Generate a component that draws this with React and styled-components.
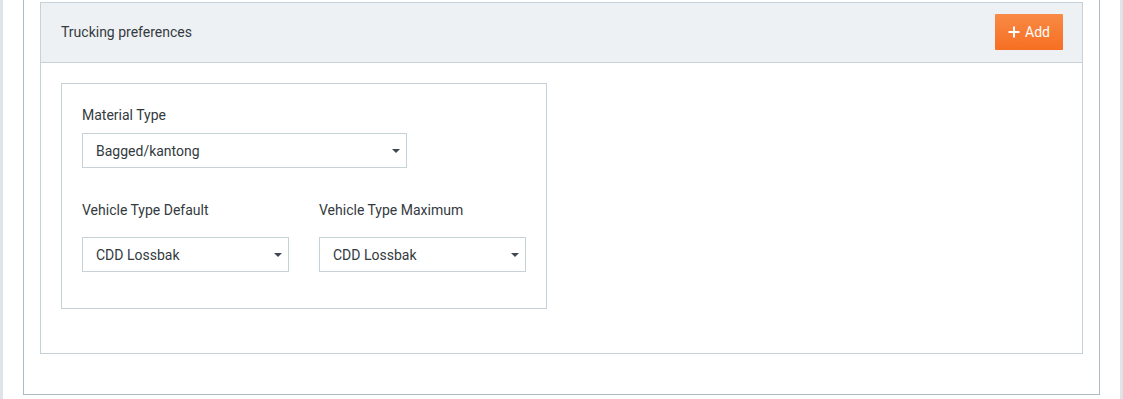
import styled, { createGlobalStyle } from 'styled-components';

const GlobalStyle = createGlobalStyle`
  html, body {
    margin: 0;
    padding: 0;
    background: #fff;
    font-family: Roboto, "Liberation Sans", Arial, sans-serif;
    color: #333a40;
  }
`;

const Page = styled.div`
  width: 1123px;
  height: 399px;
  box-sizing: border-box;
  border-left: 3px solid #dfe4e8;
  border-right: 3px solid #dfe4e8;
  padding: 0 20px;
  overflow: hidden;
`;

const Outer = styled.div`
  border: 1px solid #aebbc4;
  border-top: none;
  padding: 2px 16px 40px;
`;

const Panel = styled.div`
  border: 1px solid #c6d1d8;
`;

const PanelHeader = styled.div`
  height: 59px;
  display: flex;
  align-items: center;
  justify-content: space-between;
  padding: 0 19px 0 20px;
  background: #eef1f4;
  border-bottom: 1px solid #c6d1d8;
`;

const Title = styled.div`
  font-size: 14px;
  color: #343a40;
  margin-top: -1px;
`;

const AddButton = styled.button`
  display: flex;
  align-items: center;
  gap: 5px;
  height: 36px;
  padding: 0 13px 0 13px;
  margin-top: -2px;
  border: none;
  border-radius: 1px;
  background: linear-gradient(#f98a45, #f66f22);
  color: #fff;
  font-family: inherit;
  font-size: 14px;
  cursor: pointer;
`;

const PanelBody = styled.div`
  padding: 20px 20px 44px;
`;

const Card = styled.div`
  width: 486px;
  box-sizing: border-box;
  border: 1px solid #c6d1d8;
  padding: 20px 20px 36px;
`;

const Row = styled.div`
  display: flex;
  gap: 30px;
  margin-top: ${p => p.$top || 0}px;
`;

const Field = styled.div`
  display: flex;
  flex-direction: column;
`;

const Label = styled.div`
  font-size: 14px;
  line-height: 22px;
  color: #343a40;
  margin-bottom: ${p => p.$gap}px;
`;

const Select = styled.div`
  width: ${p => p.$w}px;
  height: 35px;
  box-sizing: border-box;
  border: 1px solid #c6d1d8;
  display: flex;
  align-items: center;
  justify-content: space-between;
  padding: 0 6px 0 13px;
  font-size: 14px;
  color: #333a40;
`;

const Caret = styled.span`
  width: 0;
  height: 0;
  border-left: 4px solid transparent;
  border-right: 4px solid transparent;
  border-top: 4px solid #3f4852;
  margin-top: 1px;
`;

function Dropdown({ width, value }) {
  return (
    <Select $w={width}>
      <span>{value}</span>
      <Caret />
    </Select>
  );
}

export default function App() {
  return (
    <>
      <GlobalStyle />
      <Page>
        <Outer>
          <Panel>
            <PanelHeader>
              <Title>Trucking preferences</Title>
              <AddButton>
                <svg width="12" height="12" viewBox="0 0 12 12">
                  <path d="M6 0.5v11M0.5 6h11" stroke="#fff" strokeWidth="2" />
                </svg>
                Add
              </AddButton>
            </PanelHeader>
            <PanelBody>
              <Card>
                <Field>
                  <Label $gap={7}>Material Type</Label>
                  <Dropdown width={325} value="Bagged/kantong" />
                </Field>
                <Row $top={31}>
                  <Field>
                    <Label $gap={16}>Vehicle Type Default</Label>
                    <Dropdown width={207} value="CDD Lossbak" />
                  </Field>
                  <Field>
                    <Label $gap={16}>Vehicle Type Maximum</Label>
                    <Dropdown width={207} value="CDD Lossbak" />
                  </Field>
                </Row>
              </Card>
            </PanelBody>
          </Panel>
        </Outer>
      </Page>
    </>
  );
}
